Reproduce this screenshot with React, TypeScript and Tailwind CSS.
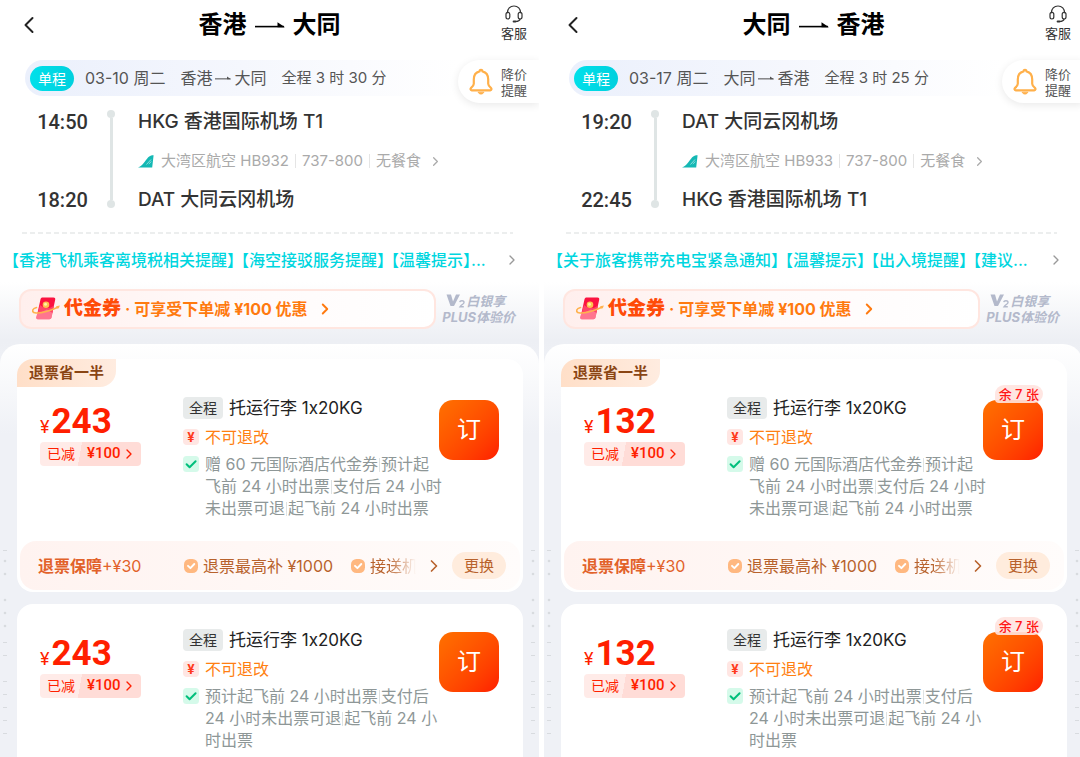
//! Round-trip fare list: one panel per leg with the flight summary, notices,
//! coupon strip and the bookable fare cards.

import { Fragment } from "react";
import { ChevronLeft, ChevronRight } from "lucide-react";

type Stop = { time: string; code: string; airport: string };

type Leg = {
  from: string;
  to: string;
  date: string;
  hours: number;
  minutes: number;
  flight: string;
  depart: Stop;
  arrive: Stop;
  notices: string[];
  price: number;
  seatsLeft?: number;
};

const LEGS: Leg[] = [
  {
    from: "香港",
    to: "大同",
    date: "03-10 周二",
    hours: 3,
    minutes: 30,
    flight: "HB932",
    depart: { time: "14:50", code: "HKG", airport: "香港国际机场 T1" },
    arrive: { time: "18:20", code: "DAT", airport: "大同云冈机场" },
    notices: ["【香港飞机乘客离境税相关提醒】", "【海空接驳服务提醒】", "【温馨提示】..."],
    price: 243,
  },
  {
    from: "大同",
    to: "香港",
    date: "03-17 周二",
    hours: 3,
    minutes: 25,
    flight: "HB933",
    depart: { time: "19:20", code: "DAT", airport: "大同云冈机场" },
    arrive: { time: "22:45", code: "HKG", airport: "香港国际机场 T1" },
    notices: ["【关于旅客携带充电宝紧急通知】", "【温馨提示】", "【出入境提醒】", "【建议..."],
    price: 132,
    seatsLeft: 7,
  },
];

// Each line is a list of terms with a thin divider between them.
const GIFT_TERMS = [
  ["赠 60 元国际酒店代金券", "预计起"],
  ["飞前 24 小时出票", "支付后 24 小时"],
  ["未出票可退", "起飞前 24 小时出票"],
];

const PLAIN_TERMS = [
  ["预计起飞前 24 小时出票", "支付后"],
  ["24 小时未出票可退", "起飞前 24 小"],
  ["时出票"],
];

function RouteArrow({ className, thin }: { className: string; thin?: boolean }) {
  return (
    <svg viewBox="0 0 30 10" className={className} aria-hidden="true">
      <path d="M0 6.6H29" stroke="currentColor" strokeWidth={thin ? 2 : 1.6} />
      <path d="M22.5 2.2L30 7.2H22.5Z" fill="currentColor" />
    </svg>
  );
}

function HeadsetIcon() {
  return (
    <svg viewBox="0 0 18 18" className="h-[18px] w-[18px]" fill="none" stroke="currentColor" strokeWidth="1.2" aria-hidden="true">
      <path d="M2.3 8.2C2.3 3.8 5.200 1 9 1s6.700 2.800 6.700 7.200" />
      <rect x="1" y="7.400" width="3.800" height="6.600" rx="1.900" />
      <rect x="13.200" y="7.400" width="3.800" height="6.600" rx="1.900" />
      <path d="M15.200 14c-.5 1.600-2.100 2.400-4.400 2.500" />
      <path d="M8.600 16.500h2" strokeWidth="1.900" strokeLinecap="round" />
    </svg>
  );
}

function BellIcon() {
  return (
    <svg viewBox="0 0 24 28" className="h-7 w-6" fill="none" stroke="#ffb04a" strokeWidth="2.200" strokeLinejoin="round" strokeLinecap="round" aria-hidden="true">
      <path d="M10.500 3.400c0-2 3-2 3 0 3.700.9 5.700 3.700 5.700 8.100v4.300c0 1.700 1 2.700 2.700 4.100.9.800.8 2.400-.6 2.400H2.700c-1.400 0-1.500-1.600-.6-2.400 1.700-1.400 2.700-2.400 2.700-4.100v-4.300c0-4.400 2-7.200 5.700-8.100Z" />
      <path d="M9.300 24.600c.9 2 4.500 2 5.400 0Z" fill="#ffb04a" strokeWidth="1" />
    </svg>
  );
}

function AirlineIcon() {
  return (
    <svg viewBox="0 0 16 13" className="h-[13px] w-4" aria-hidden="true">
      <path d="M0 12.500C4.500 11 7.500 5.500 10 2.500 11.500.8 13.500.2 15.600.2L14.200 12.500Z" fill="#14b8b4" />
      <path d="M8.500 9.500L13 4.500M10.800 9L13.400 6.500" stroke="#bdeeed" strokeWidth=".7" />
    </svg>
  );
}

function CouponIcon() {
  return (
    <svg viewBox="0 0 28 24" className="h-6 w-7" aria-hidden="true">
      <path d="M8.500 2.300c.3-1.200 1-1.800 2.200-1.800h10.800c1.300 0 2 .9 1.700 2.200L20.300 16H5.500Z" fill="#fb1340" />
      <path d="M8 8C12 12 18 12 22 8.500L19.500 20.500c-.3 1.200-1 1.700-2.100 1.700H5.800c-1.200 0-1.800-.8-1.500-1.900Z" fill="#ff4468" />
      <path d="M5 17L15 12.500 20.500 16l-1 4.500c-.3 1.200-1 1.700-2.100 1.700H5.800c-1.200 0-1.800-.8-1.500-1.900Z" fill="#ff8aa0" opacity=".7" />
      <circle cx="14" cy="7.800" r="3.300" fill="#ffc24f" />
      <circle cx="13.500" cy="7.300" r="1.500" fill="#fff0a8" />
      <path d="M4.500 10.500C-.5 12-.8 15.500 4 16c6.500.5 14-2.200 22.500-6" fill="none" stroke="#ffb24e" strokeWidth="1.600" strokeLinecap="round" />
      <path d="M24 9.300l4-.8-2 3.600Z" fill="#ffb24e" />
    </svg>
  );
}

function VipMark() {
  return (
    <svg viewBox="0 0 19 14" className="h-3.5 w-5" fill="#b3b9cb" aria-hidden="true">
      <path d="M0 .5H4.500L6.500 7.500 9.500 .5H13.500L7.500 12H4Z" />
      <path d="M13.200 8.200c.4-2 4.400-2 4.300.2 0 1.600-2.600 2.200-4 4.400h3.800" fill="none" stroke="#b3b9cb" strokeWidth="1.400" />
    </svg>
  );
}

function CheckBadge() {
  return (
    <svg viewBox="0 0 14 14" className="h-3.5 w-3.5 shrink-0" aria-hidden="true">
      <rect width="14" height="14" rx="5.500" fill="#ffb880" />
      <path d="M4 6.800L6.400 9.200 10.300 5" fill="none" stroke="#fff" strokeWidth="1.900" strokeLinecap="round" strokeLinejoin="round" />
    </svg>
  );
}

// Faint watermark ticks that run down both page gutters.
const TICKS = [0, 92, 105, 131, 144, 157, 170, 183];
const DOTS = [11, 24, 50, 63, 76];

function GutterMarks({ className }: { className: string }) {
  return (
    <svg viewBox="0 0 4 200" className={"absolute top-[280px] h-[200px] w-1 " + className} fill="#d8dbdf" aria-hidden="true">
      {TICKS.map((y) => (
        <rect key={y} x="0" y={y} width="4" height="1" />
      ))}
      {DOTS.map((y) => (
        <circle key={y} cx="2" cy={y} r="1.300" />
      ))}
    </svg>
  );
}

function LegHeader({ leg }: { leg: Leg }) {
  return (
    <header className="grid h-[50px] grid-cols-[1fr_auto_1fr] items-center">
      <button type="button" aria-label="返回" className="ml-[15px] w-7 text-[#222]">
        <ChevronLeft size={28} strokeWidth={1.7} />
      </button>
      <h1 className="flex items-center gap-2 text-2xl font-bold text-black">
        {leg.from}
        <RouteArrow className="h-2.5 w-[30px]" />
        {leg.to}
      </h1>
      <button type="button" className="mr-3 flex flex-col items-center gap-px justify-self-end pb-1 text-[13px] leading-[18px] text-[#333]">
        <HeadsetIcon />
        客服
      </button>
    </header>
  );
}

function SummaryBar({ leg }: { leg: Leg }) {
  return (
    <div className="mt-2.5 flex items-start">
      <div className="ml-[25px] flex h-9 min-w-0 flex-1 items-center rounded-l-full bg-linear-to-r from-[#ebf0fc] via-[#f5f7fd] to-white pl-[5px] whitespace-nowrap text-[#555]">
        <span className="rounded-full bg-linear-to-r from-[#00e0ea] to-[#00d0de] px-2 text-sm leading-[25px] text-white">单程</span>
        <span className="ml-[11px]">{leg.date}</span>
        <span className="ml-[15px] flex items-center gap-[3px]">
          {leg.from}
          <RouteArrow thin className="h-1.5 w-4" />
          {leg.to}
        </span>
        <span className="ml-[15px] text-[15px]">
          全程 {leg.hours} 时 {leg.minutes} 分
        </span>
      </div>
      <button
        type="button"
        className="flex h-[43px] items-center gap-2 rounded-l-full bg-white pr-3 pl-[11px] text-left text-[13px] leading-4 text-[#555] shadow-[0_2px_8px_rgba(0,0,0,0.09)]"
      >
        <BellIcon />
        <span>
          降价
          <br />
          提醒
        </span>
      </button>
    </div>
  );
}

function Itinerary({ leg }: { leg: Leg }) {
  return (
    <section className="mt-[7px] flex h-[102px] pl-[37px] text-[#333]">
      <div className="flex w-[51px] flex-col justify-between text-center font-[Roboto] text-xl leading-6 font-medium">
        <time>{leg.depart.time}</time>
        <time>{leg.arrive.time}</time>
      </div>
      <div className="ml-[19px] flex w-2 flex-col items-center">
        <i className="size-2 rounded-full bg-[#dfe5e5]" />
        <i className="w-[3px] flex-1 bg-[#dfe5e5]" />
        <i className="mb-1 size-2 rounded-full bg-[#dfe5e5]" />
      </div>
      <div className="ml-[23px] flex flex-col justify-between">
        <h2 className="text-[19px] leading-6 font-medium">
          {leg.depart.code} {leg.depart.airport}
        </h2>
        <a href="#flight" className="flex items-center text-[15px] leading-5 text-[#aaa]">
          <AirlineIcon />
          <span className="ml-[7px]">大湾区航空 {leg.flight}</span>
          <i className="mx-1.5 h-3.5 w-px bg-[#e5e5e5]" />
          737-800
          <i className="mx-1.5 h-3.5 w-px bg-[#e5e5e5]" />
          无餐食
          <ChevronRight size={15} strokeWidth={2} className="ml-[7px]" />
        </a>
        <h2 className="text-[19px] leading-6 font-medium">
          {leg.arrive.code} {leg.arrive.airport}
        </h2>
      </div>
    </section>
  );
}

function CouponStrip() {
  return (
    <div className="flex items-center gap-1.5 pr-6 pl-[19px]">
      <a
        href="#coupon"
        className="flex h-10 flex-1 items-center rounded-xl border-2 border-[#ffe6e0] bg-linear-to-r from-[#ffefed] via-[#fffafa] to-white pl-[11px] font-bold whitespace-nowrap text-[#ff7a0f]"
      >
        <CouponIcon />
        <span className="ml-1 text-[19px] font-black text-[#ff4b08]">代金券</span>
        <span className="mx-1">·</span>
        <span>可享受下单减 ¥100 优惠</span>
        <ChevronRight size={18} strokeWidth={2.5} className="ml-2" />
      </a>
      <div className="text-[13px] leading-4 font-bold whitespace-nowrap text-[#b3b9cb] italic">
        <div className="flex items-center pl-1">
          <VipMark />
          白银享
        </div>
        PLUS体验价
      </div>
    </div>
  );
}

function FareBody({ leg, terms }: { leg: Leg; terms: string[][] }) {
  return (
    <div className="flex items-start pr-6 pl-[23px] whitespace-nowrap">
      <div className="mt-[7px] w-[143px] shrink-0 font-[Roboto,'Noto_Sans_CJK_SC',sans-serif] text-[#ff1f00]">
        <div className="flex h-9 items-baseline gap-0.5 text-[35px] leading-9 font-bold">
          <span className="text-lg leading-none font-normal">¥</span>
          {leg.price}
        </div>
        <button type="button" className="mt-0.5 flex h-6 items-center rounded bg-[linear-gradient(100deg,#ffebe8_40%,#ffdcd7_40%)] pr-1 pl-[7px] text-sm">
          已减
          <span className="ml-3 text-[15px] font-medium">¥100</span>
          <ChevronRight size={16} />
        </button>
      </div>
      <div className="min-w-0 flex-1">
        <div className="flex items-center gap-1.5">
          <span className="rounded bg-[#e8ebeb] px-1.5 text-sm leading-[22px] text-[#333]">全程</span>
          <h3 className="text-[17px] leading-[22px] text-[#222]">托运行李 1x20KG</h3>
        </div>
        <p className="mt-[7px] flex items-center gap-1.5 leading-[22px] text-[#ff7f12]">
          <span className="size-4 rounded bg-[#ffe6e3] text-center text-[13px] leading-4 font-bold text-[#ff3a1c]">¥</span>
          不可退改
        </p>
        <div className="mt-[5px] flex gap-1.5 leading-[22px] text-[#8e9797]">
          <svg viewBox="0 0 16 16" className="mt-[3px] size-4 shrink-0" aria-hidden="true">
            <rect width="16" height="16" rx="3.500" fill="#d5faea" />
            <path d="M3.600 8.300L6.600 11.300 12.600 5.300" fill="none" stroke="#00bf7c" strokeWidth="2" strokeLinecap="round" strokeLinejoin="round" />
          </svg>
          <div>
            {terms.map((line) => (
              <p key={line[0]}>
                {line.map((term, i) => (
                  <Fragment key={term}>
                    {i > 0 && <i className="mx-px inline-block h-3.5 w-px bg-[#dfe3e3] align-[-2px]" />}
                    {term}
                  </Fragment>
                ))}
              </p>
            ))}
          </div>
        </div>
      </div>
      <div className="relative mt-[3px]">
        <button type="button" className="size-[60px] rounded-[14px] bg-linear-to-br from-[#ff7000] to-[#ff1a00] text-2xl text-white">
          订
        </button>
        {leg.seatsLeft && (
          <span className="absolute -top-[15px] right-0 rounded-[9px] rounded-bl-sm bg-[#ffe3df]/90 px-1 text-[13px] leading-[18px] font-medium text-[#ff1616]">
            余 {leg.seatsLeft} 张
          </span>
        )}
      </div>
    </div>
  );
}

function RefundBar() {
  return (
    <div className="mx-[3px] mt-[22px] mb-0.5 flex h-[49px] items-center rounded-2xl bg-linear-to-r from-[#fff3f0] to-[#fffcfb] pr-[14px] pl-[18px] whitespace-nowrap text-[#b8622c]">
      <span className="w-[146px] shrink-0 text-[#e2622a]">
        <b>退票保障</b>+¥30
      </span>
      <CheckBadge />
      <span className="mr-[18px] ml-[5px]">退票最高补 ¥1000</span>
      <CheckBadge />
      <span className="ml-[5px] min-w-0 flex-1 overflow-hidden mask-r-from-40% mask-r-to-100%">接送机</span>
      <ChevronRight size={20} className="mx-2 shrink-0" />
      <button type="button" className="shrink-0 rounded-full bg-[#ffecdd] px-3 text-[15px] leading-[27px]">
        更换
      </button>
    </div>
  );
}

function LegPanel({ leg }: { leg: Leg }) {
  return (
    <main className="flex min-w-0 flex-1 flex-col overflow-hidden bg-white">
      <LegHeader leg={leg} />
      <SummaryBar leg={leg} />
      <Itinerary leg={leg} />
      <div className="mt-5 mr-[26px] ml-[22px] h-0.5 bg-[repeating-linear-gradient(to_right,#eceeee_0_5px,transparent_5px_8px)]" />
      <a href="#notice" className="mt-4 flex h-5 items-center justify-between pr-[19px] pl-[11px] whitespace-nowrap text-[#00d6df]">
        <span className="flex gap-1.5 font-medium [font-feature-settings:'halt']">
          {leg.notices.map((notice) => (
            <span key={notice}>{notice}</span>
          ))}
        </span>
        <ChevronRight size={16} className="text-[#999]" />
      </a>
      <div className="relative flex flex-1 flex-col bg-[linear-gradient(to_bottom,#fff_0,#fff_12px,#edeff4_70px,#eff1f6_100px)] pt-[19px]">
        <CouponStrip />
        <div className="mt-[15px] flex flex-1 flex-col gap-3 rounded-t-[20px] bg-[linear-gradient(to_bottom,#fff,#eff1f6_90px)] pt-[15px] pr-4 pl-[17px]">
          <article className="rounded-2xl bg-white">
            <div className="mb-2.5 w-fit rounded-tl-2xl rounded-br-2xl bg-linear-to-r from-[#ffdfc8] to-[#ffece0] px-3 text-[15px] leading-7 font-bold text-[#8a4514]">
              退票省一半
            </div>
            <FareBody leg={leg} terms={GIFT_TERMS} />
            <RefundBar />
          </article>
          <article className="flex-1 rounded-t-2xl bg-white pt-[25px]">
            <FareBody leg={leg} terms={PLAIN_TERMS} />
          </article>
        </div>
        <GutterMarks className="left-[3px]" />
        <GutterMarks className="right-1" />
      </div>
    </main>
  );
}

export default function App() {
  return (
    <div className="overflow-hidden bg-white font-[Inter,'Noto_Sans_CJK_SC',sans-serif]" lang="zh-CN">
      <div className="-mr-[3px] flex min-h-screen gap-[5px]">
        {LEGS.map((leg) => (
          <LegPanel key={leg.flight} leg={leg} />
        ))}
      </div>
    </div>
  );
}
